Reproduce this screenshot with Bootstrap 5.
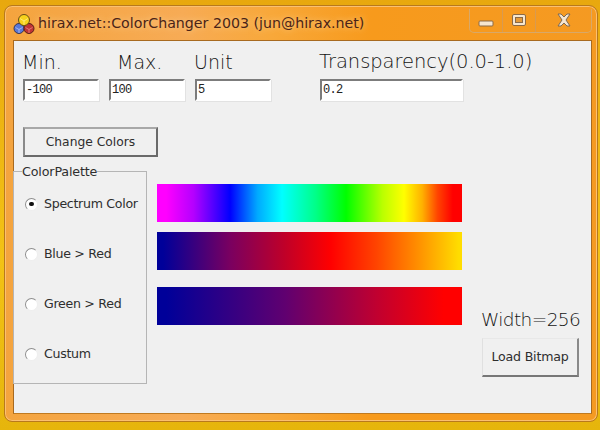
<!DOCTYPE html>
<html lang="en">
<head>
<meta charset="utf-8">
<title>hirax.net::ColorChanger 2003</title>
<link href="https://cdn.jsdelivr.net/npm/bootstrap@5.3.0/dist/css/bootstrap.min.css" rel="stylesheet">
<style>
html,body{height:100%;margin:0}
body{width:600px;height:430px;overflow:hidden;background:linear-gradient(#e8a80e,#f3c215 60%,#e6b50c);padding:5px 2px 8px 4px;font-family:"Liberation Sans",sans-serif;color:#222}
.win-frame{height:417px;border:1px solid #b8791c;border-radius:8px 9px 8px 8px;background:linear-gradient(90deg,#f4a43e 0,#f7ab55 30%,#f8a83a 45%,#f79a1c 62%,#f59a22 100%);padding:0 5px 7px 8px;box-shadow:inset 0 0 0 1px #fbc070}
.win-title{height:34px;padding-top:2px}
.win-name{font-family:"DejaVu Sans",sans-serif;font-size:14.2px;color:#4a2418;text-shadow:0 0 6px #fbd39a;margin-left:3px;white-space:nowrap}
.caps{height:24px;margin-top:-7px;border:1px solid #d8a868;border-top:0;border-radius:0 0 5px 5px;width:123px}
.cap{height:100%;width:33px;border-right:1px solid #d89a50}
.cap-wide{flex:1;border-right:0}
.client{height:374px;background:#f0f0f0;border:1px solid #a86a20;border-bottom-color:#c07a20}
.top-fields{padding:9px 0 0 9px}
.fld{width:76px;margin-right:10px}
.fld-wide{width:143px;margin-left:39px;margin-right:0}
.fld-lbl{font-family:"DejaVu Sans Light","DejaVu Sans",sans-serif;font-size:19px;line-height:24px;height:22px;color:#141414;white-space:nowrap;text-indent:-1px}
.lbl-max{padding-left:9px}
.lbl-t{font-size:19.5px;letter-spacing:-.05px}
.fld-in{display:block;width:100%;height:22px;margin-top:7px;border:2px solid;border-color:#7c7c7c #fff #fff #7c7c7c;box-shadow:1px 1px 0 #e2e2e2;background:#fff;font:12px/16px "Liberation Mono",monospace;letter-spacing:-.7px;color:#222;padding:0 0 0 1px;outline:0;border-radius:0}
.btn-change{display:block;width:135px;height:30px;margin:26px 0 0 9px;border:2px solid;border-color:#a8a8a8 #6a6a6a #6a6a6a #8a8a8a;background:#f0f0f0;font:12.3px/1 "DejaVu Sans",sans-serif;color:#2e2e2e;padding:0;border-radius:0}
.lower{margin-top:14px}
.grp{width:134px;height:213px;border:1px solid #b5b5b5;position:relative;padding:7px 0 0 11px;flex:none;margin-left:-1px}
.grp-legend{position:absolute;left:8px;top:-8px;background:#f0f0f0;font:12.7px/15px "DejaVu Sans",sans-serif;color:#2e2e2e;white-space:nowrap;letter-spacing:-.15px}
.radio-row{height:50px;font:12.6px/1 "DejaVu Sans",sans-serif;color:#2e2e2e;white-space:nowrap;letter-spacing:-.3px;gap:6px}
.rdo{width:13px;height:13px;border-radius:50%;background:#fff;border:1.5px solid #8e8e8e;border-right-color:#eee;border-bottom-color:#eee;flex:none;position:relative}
.rdo-on::after{content:"";position:absolute;left:3px;top:3px;width:4.5px;height:4.5px;border-radius:50%;background:#111}
.bars{width:305px;margin-left:10px;padding-top:13px}
.gbar{height:38px}
.g1{background:linear-gradient(90deg,#f0f 3%,#b400ff 12%,#00f 24%,#0af 33%,#0ff 41%,#0f8 52%,#0f0 62%,#bf0 74%,#ff0 81%,#ffb000 87%,#f40 92%,#f00 97%)}
.g2{margin-top:10px;background:linear-gradient(90deg,#009 2%,#7a0060 24%,#c00028 42%,#f00 57%,#f40 72%,#ff8c00 85%,#fd0 99%)}
.g3{margin-top:17px;background:linear-gradient(90deg,#009 3%,#600070 42%,#c00030 72%,#f00 94%)}
.side{margin-left:19px;width:102px;padding-top:137px}
.w-lbl{font-family:"DejaVu Sans Light","DejaVu Sans",sans-serif;font-size:18.5px;line-height:24px;color:#141414;white-space:nowrap;letter-spacing:-.6px}
.btn-load{display:block;width:97px;height:39px;margin:6px 0 0 1px;border:1px solid;border-color:#e8e8e8 #8a8a8a #777 #e0e0e0;border-bottom-width:2px;border-right-width:2px;background:#f0f0f0;font:12.6px/1 "DejaVu Sans",sans-serif;color:#2e2e2e;padding:0;letter-spacing:-.2px;border-radius:0}
</style>
</head>
<body>
<div class="win-frame d-flex flex-column">
  <div class="win-title d-flex align-items-center">
    <svg width="22" height="22" viewBox="0 0 22 22" aria-hidden="true">
      <circle cx="6" cy="15.500" r="5" fill="#5a78d8" stroke="#2a2a50" stroke-width=".9"/>
      <path d="M2.500 14.500l3.500 2 3.500-2M6 16.500V20" fill="none" stroke="#b8c8f4" stroke-width=".8"/>
      <circle cx="16" cy="15.500" r="5" fill="#c03434" stroke="#4a1414" stroke-width=".9"/>
      <path d="M12.500 14.500l3.500 2 3.500-2M16 16.500V20" fill="none" stroke="#e88" stroke-width=".8"/>
      <circle cx="11" cy="7" r="5.500" fill="#f7d21c" stroke="#5a4410" stroke-width=".9"/>
      <path d="M7 5.500l4 2.500 4-2.500M11 8v4" fill="none" stroke="#fdf090" stroke-width=".8"/>
    </svg>
    <span class="win-name flex-grow-1">hirax.net::ColorChanger 2003 (jun@hirax.net)</span>
    <div class="caps d-flex">
      <div class="cap d-flex align-items-center justify-content-center"><svg width="16" height="14" viewBox="0 0 16 14"><rect x="1" y="8" width="14" height="5" rx="1" fill="#f6e6d0" stroke="#8a6a48"/></svg></div>
      <div class="cap d-flex align-items-center justify-content-center"><svg width="16" height="14" viewBox="0 0 16 14"><rect x="1.500" y="1.500" width="13" height="11" rx="1.500" fill="#f6e6d0" stroke="#8a6a48"/><rect x="4.500" y="4.500" width="7" height="5" fill="#e59a3a" stroke="#8a6a48"/></svg></div>
      <div class="cap cap-wide d-flex align-items-center justify-content-center"><svg width="16" height="14" viewBox="0 0 16 14"><path d="M2 1h3l3 3 3-3h3L10 7l4 6h-3L8 10l-3 3H2l4-6z" fill="#f6e6d0" stroke="#7a6a58"/></svg></div>
    </div>
  </div>
  <div class="client">
    <div class="top-fields d-flex">
      <div class="fld"><div class="fld-lbl">Min.</div><input class="fld-in" value="-100" aria-label="Min"></div>
      <div class="fld"><div class="fld-lbl lbl-max">Max.</div><input class="fld-in" value="100" aria-label="Max"></div>
      <div class="fld"><div class="fld-lbl">Unit</div><input class="fld-in" value="5" aria-label="Unit"></div>
      <div class="fld fld-wide"><div class="fld-lbl lbl-t">Transparency(0.0-1.0)</div><input class="fld-in" value="0.2" aria-label="Transparency"></div>
    </div>
    <button class="btn-change" type="button">Change Colors</button>
    <div class="lower d-flex">
      <div class="grp">
        <div class="grp-legend">ColorPalette</div>
        <div class="radio-row d-flex align-items-center"><span class="rdo rdo-on"></span>Spectrum Color</div>
        <div class="radio-row d-flex align-items-center"><span class="rdo"></span>Blue &gt; Red</div>
        <div class="radio-row d-flex align-items-center"><span class="rdo"></span>Green &gt; Red</div>
        <div class="radio-row d-flex align-items-center"><span class="rdo"></span>Custum</div>
      </div>
      <div class="bars">
        <div class="gbar g1"></div>
        <div class="gbar g2"></div>
        <div class="gbar g3"></div>
      </div>
      <div class="side">
        <div class="w-lbl">Width=256</div>
        <button class="btn-load" type="button">Load Bitmap</button>
      </div>
    </div>
  </div>
</div>
<script src="https://cdn.jsdelivr.net/npm/bootstrap@5.3.0/dist/js/bootstrap.bundle.min.js"></script>
</body>
</html>
